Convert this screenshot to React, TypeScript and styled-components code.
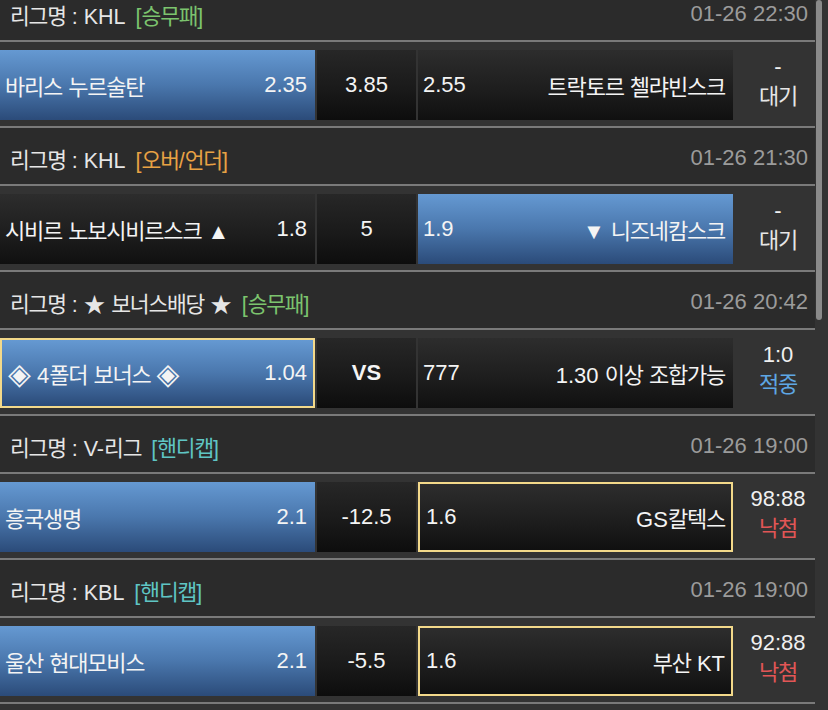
import React from "react";
import styled, { createGlobalStyle, css } from "styled-components";

const Global = createGlobalStyle`
  html, body { margin: 0; padding: 0; background: #333333; }
  body { font-family: "Liberation Sans", "Noto Sans CJK KR", "DejaVu Sans", sans-serif; color: #f2f2f2; }
  * { box-sizing: border-box; }
`;

const Page = styled.div`
  display: flex;
  height: 710px;
  overflow: hidden;
  background: #333333;
`;

const List = styled.div`
  width: 815px;
  flex: none;
  margin-top: -16px;
`;

const Track = styled.div`
  flex: 1;
  position: relative;
`;

const Thumb = styled.div`
  position: absolute;
  left: 1px;
  top: 0;
  width: 6px;
  height: 320px;
  border-radius: 3px;
  background: #8a8a8a;
`;

const Header = styled.div`
  height: 56px;
  display: flex;
  align-items: center;
  justify-content: space-between;
  padding: 4px 7px 0 10px;
  background: #2b2b2b;
`;

const League = styled.div`
  font-size: 21.5px;
  color: #e6e6e6;
  white-space: nowrap;
`;

const tagColors = {
  green: "#7cc46e",
  orange: "#e8a244",
  teal: "#5fc5c4",
};

const Tag = styled.span<{ $tone: keyof typeof tagColors }>`
  margin-left: 10px;
  color: ${(p) => tagColors[p.$tone]};
`;

const DateText = styled.div`
  font-size: 22px;
  color: #9b9b9b;
`;

const Row = styled.div`
  display: grid;
  grid-template-columns: 315px 99px 315px 1fr;
  column-gap: 2px;
  padding: 8px 0 6px;
  border-top: 2px solid #7a7a7a;
  border-bottom: 2px solid #7a7a7a;
  background: #333333;
`;

const Cell = styled.div<{ $selected?: boolean; $picked?: boolean; $side: "home" | "away" }>`
  height: 70px;
  display: flex;
  align-items: center;
  justify-content: space-between;
  font-size: 22px;
  color: #f4f4f4;
  white-space: nowrap;
  padding: 0 8px 0 5px;
  background: ${(p) =>
    p.$selected
      ? "linear-gradient(to bottom, #6599d2 0%, #4a77ad 50%, #2b4b79 100%)"
      : "linear-gradient(to bottom, #2d2d2d 0%, #1e1e1e 55%, #101010 100%)"};
  ${(p) =>
    p.$picked &&
    css`
      border: 2px solid #f3d98a;
      padding: 0 6px 0 6px;
    `}
`;

const DrawCell = styled.div<{ $bold?: boolean }>`
  height: 70px;
  display: flex;
  align-items: center;
  justify-content: center;
  font-size: 22px;
  font-weight: ${(p) => (p.$bold ? 700 : 400)};
  color: #f4f4f4;
  background: linear-gradient(to bottom, #272727 0%, #1a1a1a 55%, #0d0d0d 100%);
`;

const Status = styled.div`
  display: flex;
  flex-direction: column;
  align-items: center;
  justify-content: center;
  padding: 0 0 6px 6px;
  font-size: 22px;
  line-height: 30px;
  color: #f0f0f0;
`;

const resultColors = {
  wait: "#e6e6e6",
  win: "#5ea6e4",
  lose: "#e15656",
};

const Result = styled.div<{ $kind: keyof typeof resultColors }>`
  color: ${(p) => resultColors[p.$kind]};
`;

const Ko = styled.span`
  letter-spacing: -0.055em;
`;

const Sym = styled.span`
  font-family: "DejaVu Sans", sans-serif;
  font-size: 1.35em;
  line-height: 1;
  vertical-align: -1px;
`;

const SPLIT = /([\uAC00-\uD7A3]+|◈)/;
const HANGUL = /^[\uAC00-\uD7A3]+$/;
function t(s: string) {
  return s
    .split(SPLIT)
    .filter((p) => p.length > 0)
    .map((p, i) =>
      HANGUL.test(p) ? (
        <Ko key={i}>{p}</Ko>
      ) : p === "◈" ? (
        <Sym key={i}>{p}</Sym>
      ) : (
        <React.Fragment key={i}>{p}</React.Fragment>
      )
    );
}

type Match = {
  league: string;
  tag: string;
  tone: keyof typeof tagColors;
  date: string;
  home: string;
  homeOdds: string;
  draw: string;
  drawBold?: boolean;
  away: string;
  awayOdds: string;
  pick: "home" | "away" | null;
  picked?: "home" | "away";
  score: string;
  result: string;
  kind: keyof typeof resultColors;
};

const matches: Match[] = [
  {
    league: "KHL",
    tag: "[승무패]",
    tone: "green",
    date: "01-26 22:30",
    home: "바리스 누르술탄",
    homeOdds: "2.35",
    draw: "3.85",
    away: "트락토르 첼랴빈스크",
    awayOdds: "2.55",
    pick: "home",
    score: "-",
    result: "대기",
    kind: "wait",
  },
  {
    league: "KHL",
    tag: "[오버/언더]",
    tone: "orange",
    date: "01-26 21:30",
    home: "시비르 노보시비르스크 ▲",
    homeOdds: "1.8",
    draw: "5",
    away: "▼ 니즈네캄스크",
    awayOdds: "1.9",
    pick: "away",
    score: "-",
    result: "대기",
    kind: "wait",
  },
  {
    league: "★ 보너스배당 ★",
    tag: "[승무패]",
    tone: "green",
    date: "01-26 20:42",
    home: "◈ 4폴더 보너스 ◈",
    homeOdds: "1.04",
    draw: "VS",
    drawBold: true,
    away: "1.30 이상 조합가능",
    awayOdds: "777",
    pick: "home",
    picked: "home",
    score: "1:0",
    result: "적중",
    kind: "win",
  },
  {
    league: "V-리그",
    tag: "[핸디캡]",
    tone: "teal",
    date: "01-26 19:00",
    home: "흥국생명",
    homeOdds: "2.1",
    draw: "-12.5",
    away: "GS칼텍스",
    awayOdds: "1.6",
    pick: "home",
    picked: "away",
    score: "98:88",
    result: "낙첨",
    kind: "lose",
  },
  {
    league: "KBL",
    tag: "[핸디캡]",
    tone: "teal",
    date: "01-26 19:00",
    home: "울산 현대모비스",
    homeOdds: "2.1",
    draw: "-5.5",
    away: "부산 KT",
    awayOdds: "1.6",
    pick: "home",
    picked: "away",
    score: "92:88",
    result: "낙첨",
    kind: "lose",
  },
];

function Section({ m }: { m: Match }) {
  return (
    <>
      <Header>
        <League>
          {t(`리그명 : ${m.league}`)}
          <Tag $tone={m.tone}>{t(m.tag)}</Tag>
        </League>
        <DateText>{m.date}</DateText>
      </Header>
      <Row>
        <Cell $side="home" $selected={m.pick === "home"} $picked={m.picked === "home"}>
          <span>{t(m.home)}</span>
          <span>{m.homeOdds}</span>
        </Cell>
        <DrawCell $bold={m.drawBold}>{m.draw}</DrawCell>
        <Cell $side="away" $selected={m.pick === "away"} $picked={m.picked === "away"}>
          <span>{m.awayOdds}</span>
          <span>{t(m.away)}</span>
        </Cell>
        <Status>
          <div>{m.score}</div>
          <Result $kind={m.kind}>{t(m.result)}</Result>
        </Status>
      </Row>
    </>
  );
}

export default function App() {
  return (
    <>
      <Global />
      <Page>
        <List>
          {matches.map((m, i) => (
            <Section key={i} m={m} />
          ))}
        </List>
        <Track>
          <Thumb />
        </Track>
      </Page>
    </>
  );
}
